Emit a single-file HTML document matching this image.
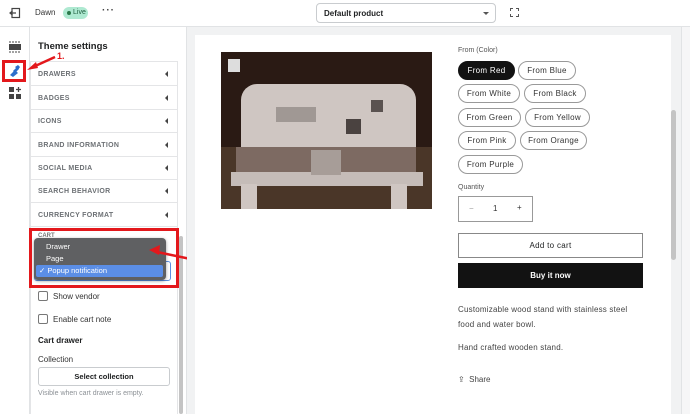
<!DOCTYPE html>
<html><head><style>
*{box-sizing:border-box;margin:0;padding:0}
body{width:690px;height:414px;overflow:hidden;font-family:"Liberation Sans",sans-serif;background:#fff;position:relative;color:#202223}
.a{position:absolute}
.row{position:absolute;left:30px;width:148px;height:24px;border-bottom:1px solid #e4e5e7;font-size:7px;font-weight:bold;color:#6d7175;letter-spacing:.3px;padding:9px 0 0 8px}
.row:after{content:"";position:absolute;right:10px;top:9px;border:3px solid transparent;border-right:3px solid #444;border-left:0}
.pill{position:absolute;height:19px;border:1px solid #999;border-radius:10px;font-size:8px;color:#333;text-align:center;line-height:17px;letter-spacing:.3px}
.cb{position:absolute;left:38px;width:10px;height:10px;border:1px solid #777;border-radius:2px}
.t8{font-size:8px;color:#333}
</style></head><body>
<div class="a" style="left:0;top:0;width:690px;height:27px;border-bottom:1px solid #e1e3e5;background:#fff"></div>
<div class="a" style="left:29px;top:27px;width:1px;height:387px;background:#e1e3e5"></div>
<svg class="a" style="left:9px;top:7px" width="12" height="12"><rect x="3" y="1.5" width="7.5" height="9" fill="none" stroke="#444" stroke-width="1.2"/><path d="M1 6h6M3.5 4l-2.5 2 2.5 2" fill="none" stroke="#444" stroke-width="1.2"/></svg>
<div class="a" style="left:35px;top:8px;font-size:8px;color:#333">Dawn</div>
<div class="a" style="left:63px;top:7px;width:25px;height:12px;border-radius:6px;background:#aee9d1;font-size:7px;line-height:12px;padding-left:10px;color:#1f5d3f">Live</div>
<div class="a" style="left:67px;top:11px;width:4px;height:4px;border-radius:2px;background:#2b7a4b"></div>
<div class="a" style="left:102px;top:5px;font-size:10px;font-weight:bold;color:#444;letter-spacing:1px">···</div>
<div class="a" style="left:316px;top:3px;width:180px;height:20px;border:1px solid #c9cccf;border-radius:4px;font-size:8px;font-weight:bold;padding:5px 7px;color:#202223">Default product</div>
<div class="a" style="left:483px;top:12px;border:3px solid transparent;border-top:3px solid #555"></div>
<div class="a" style="left:510px;top:8px;width:9px;height:9px;border:1px dashed #555"></div>
<svg class="a" style="left:9px;top:41px" width="12" height="12"><rect x="0" y="3" width="12" height="6" fill="#444"/><path d="M0 1h12M0 11h12" stroke="#444" stroke-dasharray="2 1"/></svg>
<div class="a" style="left:2px;top:60px;width:24px;height:22px;border:3px solid #e3181c"></div>
<svg class="a" style="left:8px;top:64px" width="13" height="13"><path d="M2 11l5-5 3 3-5 4z M7 3l3-2 2 2-2 3z M5 7l4-4 2 2-4 4z" fill="#2c6ecb"/></svg>
<svg class="a" style="left:9px;top:87px" width="12" height="12"><rect x="0" y="0" width="5" height="5" fill="#444"/><rect x="0" y="7" width="5" height="5" fill="#444"/><rect x="7" y="7" width="5" height="5" fill="#444"/><path d="M9.5 0v5M7 2.5h5" stroke="#444" stroke-width="1.3"/></svg>
<div class="a" style="left:186px;top:27px;width:1px;height:387px;background:#e1e3e5"></div>
<div class="a" style="left:38px;top:41px;font-size:9.5px;font-weight:bold">Theme settings</div>
<div class="a" style="left:30px;top:61px;width:148px;height:353px;border-left:1px solid #e4e5e7;border-right:1px solid #e4e5e7"></div>
<div class="a" style="left:30px;top:61px;width:148px;height:1px;background:#e4e5e7"></div>
<div class="row" style="top:62px">DRAWERS</div>
<div class="row" style="top:86px">BADGES</div>
<div class="row" style="top:109px">ICONS</div>
<div class="row" style="top:133px">BRAND INFORMATION</div>
<div class="row" style="top:156px">SOCIAL MEDIA</div>
<div class="row" style="top:179px">SEARCH BEHAVIOR</div>
<div class="row" style="top:203px">CURRENCY FORMAT</div>
<div class="a" style="left:179px;top:236px;width:4px;height:178px;background:#c4c4c4;border-radius:2px"></div>
<div class="a" style="left:38px;top:233px;font-size:6px;color:#777;font-weight:bold">CART</div>
<div class="a" style="left:34px;top:261px;width:137px;height:20px;border:1.5px solid #5c8fe0;border-radius:3px"></div>
<div class="a" style="left:34px;top:238px;width:132px;height:42px;background:#5f6062;border-radius:4px;box-shadow:0 1px 3px rgba(0,0,0,.4)"></div>
<div class="a" style="left:46px;top:242px;font-size:7.5px;color:#fff">Drawer</div>
<div class="a" style="left:46px;top:254px;font-size:7.5px;color:#fff">Page</div>
<div class="a" style="left:36px;top:265px;width:127px;height:12px;background:#5b8ee6;border-radius:2px;font-size:7.5px;color:#fff;padding:1px 0 0 3px">✓ Popup notification</div>
<div class="a" style="left:29px;top:228px;width:150px;height:60px;border:3px solid #e3181c"></div>
<div class="cb" style="top:291px"></div><div class="a t8" style="left:53px;top:292px">Show vendor</div>
<div class="cb" style="top:314px"></div><div class="a t8" style="left:53px;top:315px">Enable cart note</div>
<div class="a" style="left:38px;top:336px;font-size:8px;font-weight:bold">Cart drawer</div>
<div class="a t8" style="left:38px;top:355px">Collection</div>
<div class="a" style="left:38px;top:367px;width:132px;height:19px;border:1px solid #c9cccf;border-radius:3px;font-size:7.5px;font-weight:bold;text-align:center;line-height:17px">Select collection</div>
<div class="a" style="left:38px;top:390px;font-size:7px;color:#8c9196">Visible when cart drawer is empty.</div>
<svg class="a" style="left:0;top:0" width="690" height="414">
<path d="M55 57L33 67" stroke="#e3181c" stroke-width="2.5"/><path d="M27 70l9-8 2 6z" fill="#e3181c"/>
<path d="M205 262L157 252" stroke="#e3181c" stroke-width="2.5"/><path d="M149 250l11-5-1 10z" fill="#e3181c"/>
</svg>
<div class="a" style="left:57px;top:51px;font-size:9px;font-weight:bold;color:#e3181c">1.</div>
<div class="a" style="left:206px;top:257px;font-size:9px;font-weight:bold;color:#e3181c">2.</div>
<div class="a" style="left:187px;top:27px;width:503px;height:387px;background:#f1f2f3"></div>
<div class="a" style="left:195px;top:35px;width:476px;height:379px;background:#fff"></div>
<div class="a" style="left:681px;top:27px;width:9px;height:387px;background:#f6f6f7;border-left:1px solid #e1e3e5"></div>
<div class="a" style="left:671px;top:110px;width:5px;height:150px;background:#c4c4c4;border-radius:3px"></div>
<div class="a" style="left:221px;top:52px;width:211px;height:157px;background:#2a1a14;overflow:hidden">
 <div class="a" style="left:0;top:95px;width:211px;height:62px;background:#4a3628"></div>
 <div class="a" style="left:7px;top:7px;width:12px;height:13px;background:#ddd"></div>
 <div class="a" style="left:20px;top:32px;width:175px;height:68px;background:#cfc6c2;border-radius:16px 16px 0 0"></div>
 <div class="a" style="left:15px;top:95px;width:180px;height:30px;background:#7d6a62"></div>
 <div class="a" style="left:10px;top:120px;width:192px;height:14px;background:#c5bcb8"></div>
 <div class="a" style="left:20px;top:132px;width:16px;height:25px;background:#cfc6c2"></div>
 <div class="a" style="left:170px;top:132px;width:16px;height:25px;background:#cfc6c2"></div>
 <div class="a" style="left:55px;top:55px;width:40px;height:15px;background:#a09894"></div>
 <div class="a" style="left:90px;top:98px;width:30px;height:25px;background:#a79d98"></div>
 <div class="a" style="left:125px;top:67px;width:15px;height:15px;background:#4a4240"></div>
 <div class="a" style="left:150px;top:48px;width:12px;height:12px;background:#5a5250"></div>
</div>
<div class="a" style="left:458px;top:47px;font-size:7px;color:#555">From (Color)</div>
<div class="pill" style="left:458px;top:61px;width:57px;background:#121212;border-color:#121212;color:#fff">From Red</div>
<div class="pill" style="left:518px;top:61px;width:58px">From Blue</div>
<div class="pill" style="left:458px;top:84px;width:62px">From White</div>
<div class="pill" style="left:524px;top:84px;width:62px">From Black</div>
<div class="pill" style="left:458px;top:108px;width:63px">From Green</div>
<div class="pill" style="left:525px;top:108px;width:65px">From Yellow</div>
<div class="pill" style="left:458px;top:131px;width:58px">From Pink</div>
<div class="pill" style="left:520px;top:131px;width:67px">From Orange</div>
<div class="pill" style="left:458px;top:155px;width:65px">From Purple</div>
<div class="a" style="left:458px;top:184px;font-size:7px;color:#555">Quantity</div>
<div class="a" style="left:458px;top:196px;width:75px;height:26px;border:1px solid #999;font-size:8px;color:#333">
 <span class="a" style="left:10px;top:7px;color:#999">−</span><span class="a" style="left:34px;top:7px">1</span><span class="a" style="left:58px;top:6px">+</span></div>
<div class="a" style="left:458px;top:233px;width:185px;height:25px;border:1px solid #888;font-size:8px;text-align:center;line-height:23px;letter-spacing:.3px">Add to cart</div>
<div class="a" style="left:458px;top:263px;width:185px;height:25px;background:#121212;color:#fff;font-size:8px;font-weight:bold;text-align:center;line-height:25px">Buy it now</div>
<div class="a" style="left:458px;top:302px;font-size:8px;color:#444;line-height:15px;letter-spacing:.2px">Customizable wood stand with stainless steel<br>food and water bowl.</div>
<div class="a" style="left:458px;top:343px;font-size:8px;color:#444;letter-spacing:.2px">Hand crafted wooden stand.</div>
<div class="a" style="left:458px;top:375px;font-size:8px;color:#444">⇪ &nbsp;Share</div>
</body></html>
